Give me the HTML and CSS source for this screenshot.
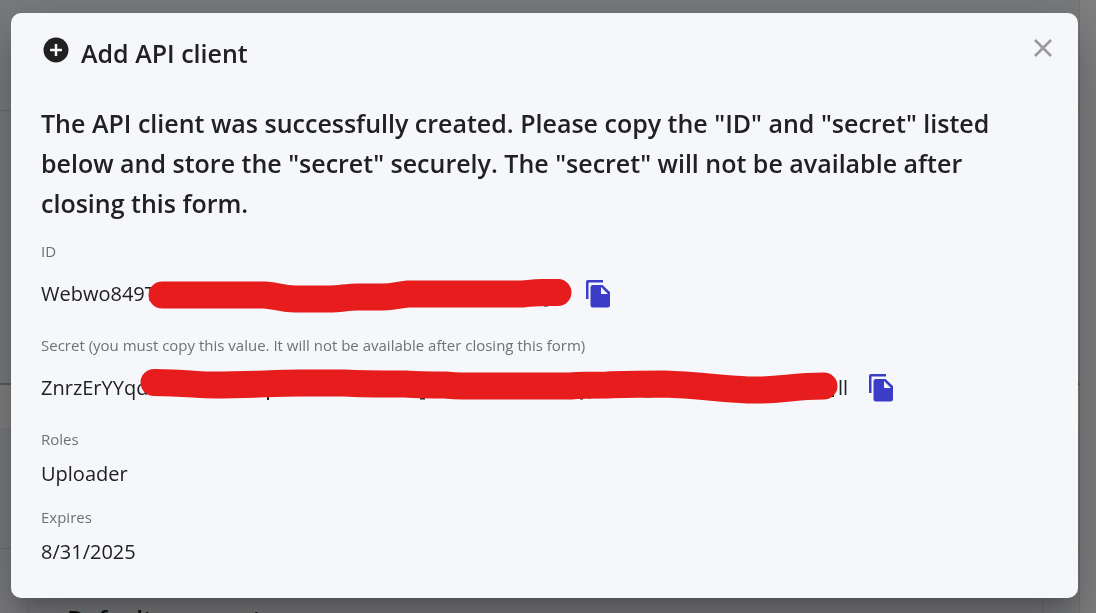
FILE: index.html
```html
<!DOCTYPE html>
<html lang="en">
<head>
<meta charset="utf-8">
<meta name="viewport" content="width=device-width, initial-scale=1">
<title>Add API client</title>
<link rel="stylesheet" href="styles.css">
</head>
<body>
<svg class="symbols" aria-hidden="true">
  <symbol id="copy" viewBox="0 0 26 30">
    <path d="M1 20V3a2 2 0 0 1 2-2h15v2.500H3.500V20z"/>
    <path fill-rule="evenodd" d="M8 6h9.500L25 13v13a2.500 2.500 0 0 1-2.500 2.500H8A2.500 2.500 0 0 1 5.500 26V8.500A2.500 2.500 0 0 1 8 6zm8 2v7h7z"/>
  </symbol>
</svg>
<div class="page" aria-hidden="true">
  <div class="page-row row-top"></div>
  <div class="page-row row-main"></div>
  <div class="page-row row-gap"></div>
  <div class="page-row row-list"></div>
  <div class="page-row row-bottom"><div class="page-card">Default payment</div></div>
</div>
<main class="overlay">
  <section class="dialog" role="dialog" aria-modal="true" aria-labelledby="dialog-title">
    <header class="dialog-header">
      <svg class="plus-icon" viewBox="0 0 26 26" aria-hidden="true"><circle cx="13" cy="13" r="12.500" fill="#212121"/><path d="M13 7v12M7 13h12" stroke="#f5f7fb" stroke-width="2.500"/></svg>
      <h1 class="title" id="dialog-title">Add API client</h1>
      <button class="close" type="button" aria-label="Close"><svg viewBox="0 0 18 18" width="18" height="18" aria-hidden="true"><path d="M1 1l16 16M17 1L1 17" stroke="#999" stroke-width="2.500"/></svg></button>
    </header>
    <h2 class="message">The API client was successfully created. Please copy the "ID" and "secret" listed below and store the "secret" securely. The "secret" will not be available after closing this form.</h2>
    <dl class="fields">
      <div class="field">
        <dt class="label">ID</dt>
        <dd class="value value-copy">
          <span class="masked masked-id">Webwo849T
            <svg class="mask mask-id" viewBox="0 0 424 44" aria-hidden="true"><path d="M396 26h4v1.500h-4z" fill="#212121"/><path d="M14 16H117C130 17 134 20 147 20H182C192 20 199 18 210 18H235C246 18 249 16 260 15H375C386 14 389 13 410 13.500" fill="none" stroke="#e71d1d" stroke-width="27" stroke-linecap="round" stroke-linejoin="round"/></svg>
          </span>
          <button class="copy" type="button" aria-label="Copy ID"><svg width="26" height="30" aria-hidden="true"><use href="#copy"/></svg></button>
        </dd>
      </div>
      <div class="field">
        <dt class="label">Secret (you must copy this value. It will not be available after closing this form)</dt>
        <dd class="value value-copy">
          <span class="masked masked-secret"><span>ZnrzErYYqd</span><span>ll</span>
            <svg class="mask mask-secret" viewBox="0 0 698 44" aria-hidden="true"><path d="M127 25h2v7h-2zM280 28h5v3.500h-5zM332 28h3v3h-3zM440 28h3v3.500h-3zM448 28h3v2.500h-3zM504 26h8v3.500h-8zM692 26h2v3h-2z" fill="#212121"/><path d="M14 14.500C45 15 60 17 75 17C110 17 135 15 160 15H205C220 16 225 16 265 16C280 17 285 17 305 17C315 18 316 18 322 18H430C442 17 450 17 467 17C485 16 490 16 524 16C555 17 575 20 608 22C640 23 650 18 684 18" fill="none" stroke="#e71d1d" stroke-width="27" stroke-linecap="round" stroke-linejoin="round"/></svg>
          </span>
          <button class="copy" type="button" aria-label="Copy secret"><svg width="26" height="30" aria-hidden="true"><use href="#copy"/></svg></button>
        </dd>
      </div>
      <div class="field">
        <dt class="label">Roles</dt>
        <dd class="value">Uploader</dd>
      </div>
      <div class="field">
        <dt class="label">Expires</dt>
        <dd class="value">8/31/2025</dd>
      </div>
    </dl>
  </section>
</main>
</body>
</html>
```
FILE: styles.css
```css
* { box-sizing: border-box; }
body {
  margin: 0;
  color: #212121;
  background: #808080;
  font-family: "Open Sans", "Noto Sans", sans-serif;
  overflow: hidden;
}
.symbols { position: absolute; width: 0; height: 0; }

/* Dimmed page under the dialog */
.page {
  position: fixed;
  inset: 0;
  display: flex;
  flex-direction: column;
  overflow: hidden;
  padding-right: 16px;
}
.page-row {
  flex: none;
  background: #7a7b7d;
  border-bottom: 1px solid #6c6c6d;
  border-right: 1px solid #727272;
}
.row-top { height: 111px; }
.row-main { height: 274px; border-bottom: 2px solid #5c5c5c; }
.row-gap { height: 43px; background: #808080; border-bottom: 0; }
.row-list { height: 121px; }
.row-bottom { height: 120px; padding: 52px 36px 0 28px; }
.page-card {
  height: 60px;
  padding-left: 38px;
  border: 1px solid #707070;
  border-top: 0;
  color: #111;
  font-size: 24px;
  font-weight: 600;
  line-height: 36px;
}

.overlay { position: relative; padding: 13px 18px 15px 11px; }
.dialog {
  padding: 20px 24px 31px 30px;
  background: #f5f7fb;
  border-radius: 10px;
  box-shadow: 0 14px 19px -9px rgba(0, 0, 0, .2), 0 30px 48px 4px rgba(0, 0, 0, .14), 0 11px 58px 10px rgba(0, 0, 0, .12);
}
.dialog-header { display: flex; align-items: flex-start; }
.plus-icon { width: 26px; height: 26px; margin: 4px 12px 0 2px; }
.title { margin: 0; font-size: 25px; font-weight: 600; line-height: 40px; }
.close {
  display: flex;
  margin-left: auto;
  padding: 6px 2px;
  border: 0;
  background: none;
  cursor: pointer;
}
.message {
  margin: 30px 30px 18px 0;
  font-size: 25px;
  font-weight: 600;
  line-height: 40px;
}
.fields { display: flex; flex-direction: column; gap: 18px; margin: 0; }
.label { color: #707173; font-size: 15px; line-height: 20px; }
.value { margin: 10px 0 0; font-size: 20px; line-height: 30px; }
.value-copy { display: flex; align-items: center; gap: 20px; height: 46px; }
.masked { position: relative; display: flex; justify-content: space-between; }
.masked-id { width: 524px; }
.masked-secret { width: 807px; }

/* Marker strokes drawn over the credentials */
.mask { position: absolute; height: 44px; }
.mask-id { left: 107px; top: 0; width: 424px; }
.mask-secret { left: 99px; top: -5px; width: 698px; }
.copy {
  display: flex;
  padding: 0;
  border: 0;
  background: none;
  color: #3b3dc8;
  fill: currentColor;
  cursor: pointer;
}
```
